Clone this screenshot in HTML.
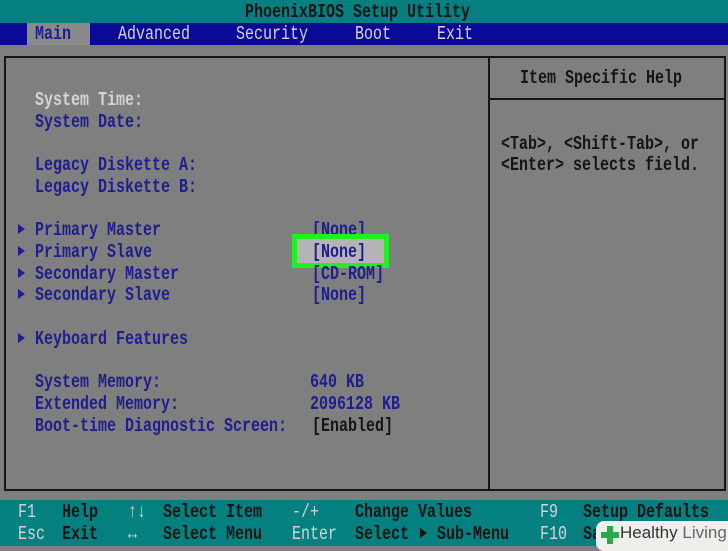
<!DOCTYPE html><html><head><style>
*{margin:0;padding:0}
body{width:728px;height:546px;background:#7f7f7f;position:relative;overflow:hidden;font-family:"Liberation Mono",monospace;font-size:15px;font-weight:bold}
.t{position:absolute;white-space:pre;line-height:22px;transform:translateY(2px) scaleY(1.3);transform-origin:left center}
.b{color:#1e1e8e}.w{color:#d4d4d4}.k{color:#151515}
.arr{position:absolute;width:0;height:0;border-left:7px solid #1e1e8e;border-top:5px solid transparent;border-bottom:5px solid transparent}
</style></head><body>
<div style="position:absolute;left:0;top:0;width:728px;height:23px;background:#058080"></div>
<div class="t k" style="left:245px;top:0px">PhoenixBIOS Setup Utility</div>
<div style="position:absolute;left:0;top:23px;width:728px;height:22px;background:#0a0a96"></div>
<div style="position:absolute;left:27px;top:23px;width:63px;height:22px;background:#8a8a8a"></div>
<div class="t b" style="left:35px;top:22px">Main</div>
<div class="t w" style="left:118px;top:22px;font-weight:normal">Advanced</div>
<div class="t w" style="left:236px;top:22px;font-weight:normal">Security</div>
<div class="t w" style="left:355px;top:22px;font-weight:normal">Boot</div>
<div class="t w" style="left:437px;top:22px;font-weight:normal">Exit</div>
<div style="position:absolute;left:4px;top:56px;width:482px;height:431px;border:2px solid #151515"></div>
<div style="position:absolute;left:488px;top:56px;width:234px;height:431px;border:2px solid #151515"></div>
<div style="position:absolute;left:488px;top:98px;width:238px;height:2px;background:#151515"></div>
<div class="t k" style="left:520px;top:66px">Item Specific Help</div>
<div class="t k" style="left:501px;top:132px">&lt;Tab&gt;, &lt;Shift-Tab&gt;, or</div>
<div class="t k" style="left:501px;top:153px">&lt;Enter&gt; selects field.</div>
<div class="t w" style="left:35px;top:88px">System Time:</div>
<div class="t b" style="left:35px;top:110px">System Date:</div>
<div class="t b" style="left:35px;top:153px">Legacy Diskette A:</div>
<div class="t b" style="left:35px;top:175px">Legacy Diskette B:</div>
<div class="arr" style="left:18px;top:224px"></div>
<div class="arr" style="left:18px;top:246px"></div>
<div class="arr" style="left:18px;top:268px"></div>
<div class="arr" style="left:18px;top:289px"></div>
<div class="arr" style="left:18px;top:333px"></div>
<div class="t b" style="left:35px;top:218px">Primary Master</div>
<div class="t b" style="left:35px;top:240px">Primary Slave</div>
<div class="t b" style="left:35px;top:262px">Secondary Master</div>
<div class="t b" style="left:35px;top:283px">Secondary Slave</div>
<div class="t b" style="left:35px;top:327px">Keyboard Features</div>
<div class="t b" style="left:312px;top:218px">[None]</div>
<div style="position:absolute;left:292px;top:234px;width:87px;height:24px;border:5px solid #22ee22;background:#b4b4b4"></div>
<div class="t b" style="left:312px;top:240px">[None]</div>
<div class="t b" style="left:312px;top:262px">[CD-ROM]</div>
<div class="t b" style="left:312px;top:283px">[None]</div>
<div class="t b" style="left:35px;top:370px">System Memory:</div>
<div class="t b" style="left:35px;top:392px">Extended Memory:</div>
<div class="t b" style="left:35px;top:414px">Boot-time Diagnostic Screen:</div>
<div class="t b" style="left:310px;top:370px">640 KB</div>
<div class="t b" style="left:310px;top:392px">2096128 KB</div>
<div class="t k" style="left:312px;top:414px">[Enabled]</div>
<div style="position:absolute;left:0;top:500px;width:728px;height:46px;background:#058080"></div>
<div class="t w" style="left:18px;top:500px;font-weight:normal">F1</div>
<div class="t k" style="left:62px;top:500px">Help</div>
<div class="t w" style="left:128px;top:500px;font-weight:normal">↑↓</div>
<div class="t k" style="left:163px;top:500px">Select Item</div>
<div class="t w" style="left:292px;top:500px;font-weight:normal">-/+</div>
<div class="t k" style="left:355px;top:500px">Change Values</div>
<div class="t w" style="left:540px;top:500px;font-weight:normal">F9</div>
<div class="t k" style="left:583px;top:500px">Setup Defaults</div>
<div class="t w" style="left:18px;top:522px;font-weight:normal">Esc</div>
<div class="t k" style="left:62px;top:522px">Exit</div>
<div class="t w" style="left:128px;top:522px;font-weight:normal">↔</div>
<div class="t k" style="left:163px;top:522px">Select Menu</div>
<div class="t w" style="left:292px;top:522px;font-weight:normal">Enter</div>
<div class="t k" style="left:355px;top:522px">Select</div>
<div style="position:absolute;left:420px;top:528px;width:0;height:0;border-left:7px solid #151515;border-top:5px solid transparent;border-bottom:5px solid transparent"></div>
<div class="t k" style="left:437px;top:522px">Sub-Menu</div>
<div class="t w" style="left:540px;top:522px;font-weight:normal">F10</div>
<div class="t k" style="left:583px;top:522px">Sa</div>
<div style="position:absolute;left:596px;top:521px;width:140px;height:30px;background:#eeeeea;border-radius:8px"></div>
<div style="position:absolute;left:601px;top:532px;width:18px;height:6px;background:#2aa84a"></div>
<div style="position:absolute;left:607px;top:526px;width:6px;height:18px;background:#2aa84a"></div>
<div style="position:absolute;left:620px;top:523px;font-family:'Liberation Sans',sans-serif;font-size:17px;font-weight:normal;color:#333;white-space:nowrap">Healthy<span style="color:#666"> Living</span></div>
</body></html>
